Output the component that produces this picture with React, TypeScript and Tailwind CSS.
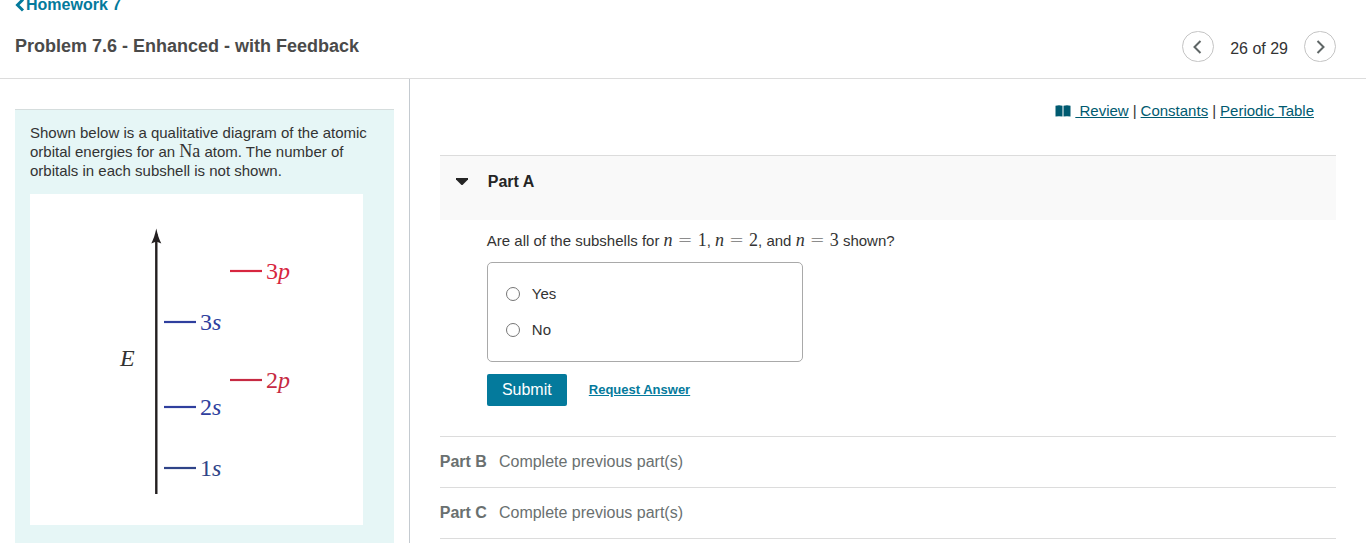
import { Fragment } from "react";

const levels = [
  { label: "3", orbital: "p", x: 200, y: 77, color: "#d7263f" },
  { label: "3", orbital: "s", x: 134, y: 128, color: "#2f3f9e" },
  { label: "2", orbital: "p", x: 200, y: 186, color: "#c62a42" },
  { label: "2", orbital: "s", x: 134, y: 213, color: "#2f3f9e" },
  { label: "1", orbital: "s", x: 134, y: 274, color: "#2f4488" },
];

const resources = ["Constants", "Periodic Table"];
const answers = ["Yes", "No"];
const lockedParts = ["Part B", "Part C"];

function Equation({ value }: { value: string }) {
  return (
    <span className="inline-block whitespace-nowrap font-['Liberation_Serif',serif] text-lg leading-none">
      <i>n</i>
      <span className="mx-[5px] font-['DejaVu_Sans',sans-serif] font-extralight leading-none">=</span>
      {value}
    </span>
  );
}

function Chevron({ points }: { points: string }) {
  return (
    <svg viewBox="0 0 16 16" className="size-4" fill="none" stroke="#5f6666" strokeWidth="2">
      <polyline points={points} />
    </svg>
  );
}

function EnergyDiagram() {
  return (
    <svg
      viewBox="0 0 333 331"
      className="block w-[333px] max-w-full bg-white font-['Liberation_Serif',serif]"
      role="img"
      aria-label="Orbital energy diagram"
    >
      <path d="M126.3 40V300" stroke="#231f20" strokeWidth="2.4" />
      <path d="M126.3 34.5C127.5 40 129 45 131.3 49.5L126.3 47.5L121.3 49.5C123.6 45 125.1 40 126.3 34.5Z" fill="#231f20" />
      <text x="90" y="172" fontSize="24" fontStyle="italic" fill="#333">E</text>
      {levels.map((level) => (
        <Fragment key={level.label + level.orbital}>
          <path d={`M${level.x} ${level.y}h32`} stroke={level.color} strokeWidth="2.2" />
          <text x={level.x + 36} y={level.y + 8} fontSize="24" fill={level.color}>
            {level.label}
            <tspan fontStyle="italic">{level.orbital}</tspan>
          </text>
        </Fragment>
      ))}
    </svg>
  );
}

function Header() {
  return (
    <header className="shrink-0 border-b border-[#dcdcdc] pb-4 pl-[15px] pr-[30px]">
      <a href="#homework" className="-mt-[5px] flex h-5 items-center text-base font-bold leading-5 text-[#047a9c]">
        <svg viewBox="0 0 11 14" className="h-[14px] w-[11px]" fill="none" stroke="currentColor" strokeWidth="3">
          <path d="M8 1.5L2.5 7L8 12.5" />
        </svg>
        Homework 7
      </a>
      <div className="mt-4 flex h-[31px] items-start justify-between">
        <h1 className="text-lg font-bold leading-[30px] text-[#4a4a4a]">Problem 7.6 - Enhanced - with Feedback</h1>
        <nav className="flex items-center gap-4">
          <button
            aria-label="Previous item"
            className="grid h-[31px] w-8 place-items-center rounded-full border border-[#c4c4c4]"
          >
            <Chevron points="10.5,2 4.5,8 10.5,14" />
          </button>
          <span className="pt-1 text-base leading-6">26 of 29</span>
          <button
            aria-label="Next item"
            className="grid h-[31px] w-8 place-items-center rounded-full border border-[#c4c4c4]"
          >
            <Chevron points="5.5,2 11.5,8 5.5,14" />
          </button>
        </nav>
      </div>
    </header>
  );
}

export default function App() {
  return (
    <div className="flex h-screen flex-col overflow-hidden bg-white font-['Liberation_Sans',Arial,sans-serif] text-[15px] text-[#333]">
      <Header />

      <div className="flex min-h-0 flex-1">
        <aside className="w-[30%] shrink-0 border-r border-[#c4cad0] px-[15px] pt-[30px]">
          <div className="h-full border-t border-[#d5dddd] bg-[#e6f6f6] px-[15px] pt-[13px]">
            <p className="mb-[14px] leading-[19px]">
              Shown below is a qualitative diagram of the atomic orbital energies for an{" "}
              <span className="inline-block font-['Liberation_Serif',serif] text-lg leading-none">Na</span> atom. The
              number of orbitals in each subshell is not shown.
            </p>
            <EnergyDiagram />
          </div>
        </aside>

        <main className="flex-1 px-[30px]">
          <div className="mr-[22px] flex items-center justify-end gap-1 pt-[22px] leading-5">
            <a href="#review" className="flex items-center gap-1 text-[#005a70]">
              <svg viewBox="0 0 16 12" className="h-3 w-4" fill="currentColor">
                <path d="M.5 .8Q4-.4 7.5.8V11.6Q4 10.8.5 11.6ZM8.5.8Q12-.4 15.5.8V11.6Q12 10.8 8.5 11.6Z" />
              </svg>
              <span className="whitespace-pre underline"> Review</span>
            </a>
            {resources.map((name) => (
              <Fragment key={name}>
                <span>|</span>
                <a href="#resource" className="text-[#005a70] underline">
                  {name}
                </a>
              </Fragment>
            ))}
          </div>

          <section className="mt-[34px]">
            <h2 className="h-[65px] border-t border-[#dcdcdc] bg-[#f9f9f9] px-4 pt-4">
              <button className="flex items-center gap-5 text-base font-bold leading-5 text-[#252525]">
                <svg viewBox="0 0 12 8" className="h-2 w-3" fill="currentColor">
                  <path d="M0 0H12V1.5L6.5 7H5.5L0 1.5Z" />
                </svg>
                Part A
              </button>
            </h2>

            <div className="px-[47px] pb-[30px] pt-[10px]">
              <p className="leading-[22px]">
                Are all of the subshells for <Equation value="1" />, <Equation value="2" />, and <Equation value="3" />{" "}
                shown?
              </p>
              <fieldset className="mt-[10px] flex w-[316px] flex-col gap-4 rounded-[5px] border border-[#a9a9a9] px-[18px] py-[21px]">
                {answers.map((answer) => (
                  <label key={answer} className="flex items-center gap-3 leading-5">
                    <input
                      type="radio"
                      name="subshells"
                      className="size-[14px] appearance-none rounded-full border border-[#767676] checked:border-4"
                    />
                    {answer}
                  </label>
                ))}
              </fieldset>
              <div className="mt-3 flex items-center gap-[22px]">
                <button className="h-8 w-20 rounded-xs bg-[#047a9c] text-base text-white">Submit</button>
                <button className="text-[13px] font-bold text-[#047a9c] underline">Request Answer</button>
              </div>
            </div>
          </section>

          <ul className="border-b border-[#dcdcdc] text-base text-[#6a7070]">
            {lockedParts.map((part) => (
              <li key={part} className="flex gap-3 border-t border-[#dcdcdc] py-[15px] leading-5">
                <b>{part}</b>
                <span>Complete previous part(s)</span>
              </li>
            ))}
          </ul>
        </main>
      </div>
    </div>
  );
}
